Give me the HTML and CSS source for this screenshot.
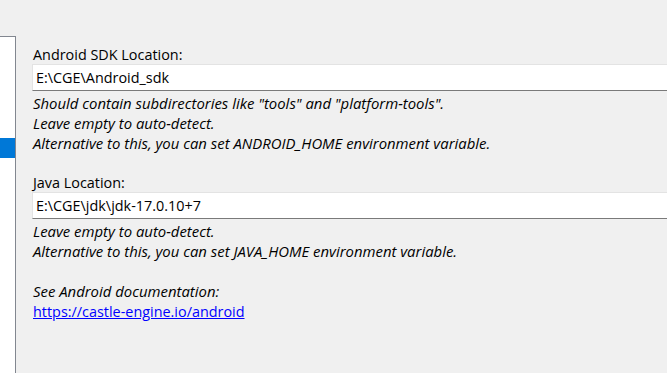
FILE: index.html
```html
<!DOCTYPE html>
<html lang="en">
<head>
  <meta charset="UTF-8" />
  <title>Android Settings</title>
  <link rel="stylesheet" href="styles.css">
</head>
<body>

  <!-- Left list (mostly scrolled out of view) -->
  <div class="side-list">
    <div class="side-item"></div>
    <div class="side-item"></div>
    <div class="side-item"></div>
    <div class="side-item"></div>
    <div class="side-item"></div>
    <div class="side-item selected"></div>
  </div>

  <!-- Settings page -->
  <div class="settings">
    <div class="field">
      <label class="field-label">Android SDK Location:</label>
      <div class="edit">E:\CGE\Android_sdk</div>
      <div class="hint">
        <p>Should contain subdirectories like "tools" and "platform-tools".</p>
        <p>Leave empty to auto-detect.</p>
        <p>Alternative to this, you can set ANDROID_HOME environment variable.</p>
      </div>
    </div>

    <div class="field">
      <label class="field-label">Java Location:</label>
      <div class="edit">E:\CGE\jdk\jdk-17.0.10+7</div>
      <div class="hint">
        <p>Leave empty to auto-detect.</p>
        <p>Alternative to this, you can set JAVA_HOME environment variable.</p>
        <p>&nbsp;</p>
        <p>See Android documentation:</p>
        <p><a href="https://castle-engine.io/android">https://castle-engine.io/android</a></p>
      </div>
    </div>
  </div>

</body>
</html>
```

FILE: styles.css
```css
*, *::before, *::after {
  box-sizing: border-box;
}

body, html {
  margin: 0;
  padding: 0;
  width: 100%;
  height: 100%;
  overflow: hidden;
}

body {
  display: flex;
  background: #f0f0f0;
  font-family: 'Open Sans', sans-serif;
  font-size: 14.4px;
  color: #000;
}

.side-list {
  width: 16px;
  margin-top: 36px;
  background: #fff;
  border-top: 1px solid #828790;
  border-right: 1px solid #828790;
  padding-top: 1px;
}

.side-item {
  height: 20px;
}

.side-item.selected {
  background: #0078d7;
}

.settings {
  flex: 1;
  padding: 46px 0 0 16px;
  display: flex;
  flex-direction: column;
  gap: 21px;
}

.field-label {
  display: block;
  height: 18px;
  line-height: 18px;
  padding-left: 1px;
}

.edit {
  height: 27px;
  line-height: 26px;
  padding-left: 3px;
  background: #fff;
  border-top: 1px solid #e3e3e3;
  border-left: 1px solid #e3e3e3;
  border-bottom: 1px solid #7a7a7a;
}

.hint {
  margin-top: 2px;
  padding-left: 1px;
  font-style: italic;
  font-size: 14.9px;
}

.hint p {
  margin: 0;
  height: 20px;
  line-height: 20px;
}

.hint a {
  color: #0000ff;
  font-style: normal;
  font-size: 14.4px;
}
```
